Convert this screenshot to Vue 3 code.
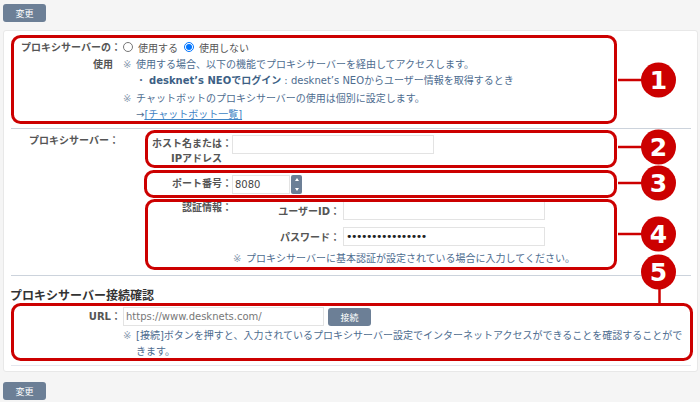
<script setup>
const badges = [
  { n: 1, y: 80 },
  { n: 2, y: 147 },
  { n: 3, y: 183 },
  { n: 4, y: 234 },
];
</script>

<template>
  <div class="page">
    <button class="btn">変更</button>

    <div class="card">
      <div class="row use-row">
        <div class="label">プロキシサーバーの：<br /><span class="label-sub">使用</span></div>
        <div class="value">
          <div class="radios">
            <label><input type="radio" name="proxy" />使用する</label>
            <label><input type="radio" name="proxy" checked />使用しない</label>
          </div>
          <p class="note"><span class="mark">※</span>使用する場合、以下の機能でプロキシサーバーを経由してアクセスします。</p>
          <p class="note sub"><span class="dot">・</span><b>desknet’s NEOでログイン</b> : desknet’s NEOからユーザー情報を取得するとき</p>
          <p class="note gap"><span class="mark">※</span>チャットボットのプロキシサーバーの使用は個別に設定します。</p>
          <p class="note arrow">→<a href="#">[チャットボット一覧]</a></p>
        </div>
      </div>

      <div class="row server-row">
        <div class="label server-label">プロキシサーバー：</div>
        <div class="server">
          <div class="sub-row host">
            <div class="sub-label">ホスト名または：<br /><span class="ip">IPアドレス</span></div>
            <input class="input wide" type="text" />
          </div>
          <div class="sub-row port">
            <div class="sub-label">ポート番号：</div>
            <input class="input short" type="text" value="8080" />
            <div class="spin"><i class="up"></i><i class="down"></i></div>
          </div>
          <div class="auth">
            <div class="sub-label auth-label">認証情報：</div>
            <div class="auth-fields">
              <div class="auth-row">
                <span class="auth-name">ユーザーID：</span>
                <input class="input wide" type="text" />
              </div>
              <div class="auth-row">
                <span class="auth-name">パスワード：</span>
                <input class="input wide pwd" type="password" value="aaaaaaaaaaaaaaaa" />
              </div>
            </div>
          </div>
          <p class="note auth-note"><span class="mark">※</span>プロキシサーバーに基本認証が設定されている場合に入力してください。</p>
        </div>
      </div>

      <h2 class="heading">プロキシサーバー接続確認</h2>
      <div class="row url-row">
        <div class="label url-label">URL：</div>
        <div class="value">
          <div class="url-line">
            <input class="input wide" type="text" placeholder="https://www.desknets.com/" />
            <button class="btn small">接続</button>
          </div>
          <p class="note url-note"><span class="mark">※</span><span>[接続]ボタンを押すと、入力されているプロキシサーバー設定でインターネットアクセスができることを確認することができます。</span></p>
        </div>
      </div>
    </div>

    <button class="btn">変更</button>

    <!-- callouts drawn over the screenshot -->
    <svg class="callouts" width="700" height="402" viewBox="0 0 700 402">
      <g fill="none" stroke="#cc0000" stroke-width="3">
        <rect x="12.5" y="36.5" width="603" height="86" rx="8" />
        <rect x="146.5" y="131.5" width="469" height="35" rx="8" />
        <rect x="145.5" y="171.5" width="470" height="25" rx="8" />
        <rect x="146.5" y="200.5" width="469" height="68" rx="8" />
        <rect x="12.5" y="304.5" width="679" height="55" rx="8" />
        <line x1="618" y1="80" x2="645" y2="80" stroke-width="2.5" />
        <line x1="618" y1="147" x2="645" y2="147" stroke-width="2.5" />
        <line x1="618" y1="183" x2="645" y2="183" stroke-width="2.5" />
        <line x1="618" y1="234" x2="645" y2="234" stroke-width="2.5" />
        <line x1="659.5" y1="285" x2="659.5" y2="303" stroke-width="2.5" />
      </g>
      <g v-for="b in badges" :key="b.n">
        <circle cx="658.5" :cy="b.y" r="17.5" fill="#cc0000" />
        <text x="658.5" :y="b.y + 9" class="badge-num">{{ b.n }}</text>
      </g>
      <circle cx="658.5" cy="272" r="17.5" fill="#cc0000" />
      <text x="658.5" y="281" class="badge-num">5</text>
    </svg>
  </div>
</template>

<style scoped>
.page {
  position: relative;
  width: 700px;
  height: 402px;
  box-sizing: border-box;
  padding: 4px 2px 0 3px;
  background: #f5f5f5;
  overflow: hidden;
  font-family: "DejaVu Sans", "Noto Sans CJK JP", sans-serif;
  font-size: 10px;
  color: #555;
}

.btn {
  display: block;
  width: 43px;
  height: 18px;
  padding: 0;
  border: none;
  border-radius: 3px;
  background: #6c7f96;
  color: #fff;
  font: inherit;
  font-size: 9px;
}

.card {
  box-sizing: border-box;
  height: 342px;
  margin: 8px 0 10px;
  padding: 8px 6px 0 7px;
  border: 1px solid #e8e8e8;
  border-radius: 3px;
  background: #fff;
}

.row {
  display: flex;
}

.use-row {
  height: 89px;
  border-bottom: 1px solid #ccd3dc;
}

.label {
  flex: none;
  width: 110px;
  text-align: right;
  font-weight: 700;
  line-height: 17px;
  white-space: nowrap;
}

.label-sub {
  padding-right: 8px;
}

.value {
  flex: 1;
  margin-left: 2px;
}

.radios {
  display: flex;
  gap: 6px;
  height: 16px;
  padding-bottom: 2px;
  align-items: center;
}

.radios label {
  display: flex;
  align-items: center;
}

.radios input {
  width: 10px;
  height: 10px;
  margin: 0 5px 0 0;
}

.note {
  margin: 0;
  line-height: 16px;
  color: #4d6c8f;
  white-space: nowrap;
}

.mark {
  display: inline-block;
  width: 13px;
  color: #8a9bb0;
}

.sub {
  padding-left: 13px;
}

.dot {
  display: inline-block;
  width: 13px;
}

.sub b {
  color: #3d5f85;
}

.gap {
  margin-top: 2px;
}

.arrow {
  padding-left: 13px;
}

.arrow a {
  color: #3d82c4;
}

.server-row {
  height: 146px;
  border-bottom: 1px solid #ccd3dc;
}

.server-label {
  width: 108px;
  padding-top: 3px;
}

.server {
  margin-left: 30px;
}

.sub-row {
  display: flex;
}

.sub-label {
  flex: none;
  width: 83px;
  text-align: right;
  font-weight: 700;
  line-height: 15px;
  white-space: nowrap;
}

.host {
  height: 40px;
  padding-top: 6px;
}

.ip {
  padding-right: 10px;
}

.host .sub-label {
  padding-top: 1px;
}

.input {
  box-sizing: border-box;
  height: 19px;
  margin: 0;
  padding: 0 2px;
  border: 1px solid #e3e3e3;
  outline: none;
  background: #fff;
  color: #444;
  font: inherit;
}

.input::placeholder {
  color: #777;
}

.wide {
  width: 202px;
}

.url-line .wide {
  width: 201px;
}

.short {
  width: 58px;
}

.pwd {
  color: #222;
  font-size: 11px;
  letter-spacing: -1.5px;
}

.port {
  height: 26px;
  align-items: flex-start;
}

.port .sub-label {
  padding-top: 1px;
}

.spin {
  display: flex;
  flex-direction: column;
  justify-content: space-between;
  align-items: center;
  box-sizing: border-box;
  width: 11px;
  height: 19px;
  margin-left: 1px;
  padding: 3px 0;
  border-radius: 2px;
  background: #6c7f96;
}

.spin i {
  width: 0;
  height: 0;
  border-left: 2.5px solid transparent;
  border-right: 2.5px solid transparent;
}

.spin .up {
  border-bottom: 3px solid #fff;
}

.spin .down {
  border-top: 3px solid #fff;
}

.auth {
  display: flex;
  height: 50px;
}

.auth-label {
  margin-top: -1px;
}

.auth-fields {
  display: flex;
  flex-direction: column;
  gap: 7px;
}

.auth-row {
  display: flex;
  align-items: center;
  width: 313px;
  justify-content: flex-end;
}

.auth-name {
  margin-right: 3px;
  font-weight: 700;
  white-space: nowrap;
}

.auth-note {
  padding-left: 84px;
}

.heading {
  margin: 11px 0 0 -1px;
  height: 20px;
  color: #333;
  font-size: 12px;
  font-weight: 700;
  line-height: 18px;
}

.url-row {
  height: 58px;
  border-bottom: 1px solid #e4e7ee;
}

.url-label {
  padding-top: 1px;
}

.url-line {
  display: flex;
  gap: 4px;
  height: 21px;
}

.small {
  height: 18px;
  margin-top: 1px;
}

.url-note {
  display: flex;
  white-space: normal;
}

.url-note .mark {
  flex: none;
}

.callouts {
  position: absolute;
  left: 0;
  top: 0;
  pointer-events: none;
}

.badge-num {
  fill: #fff;
  font-family: "DejaVu Sans", sans-serif;
  font-size: 25px;
  font-weight: 700;
  text-anchor: middle;
}
</style>
